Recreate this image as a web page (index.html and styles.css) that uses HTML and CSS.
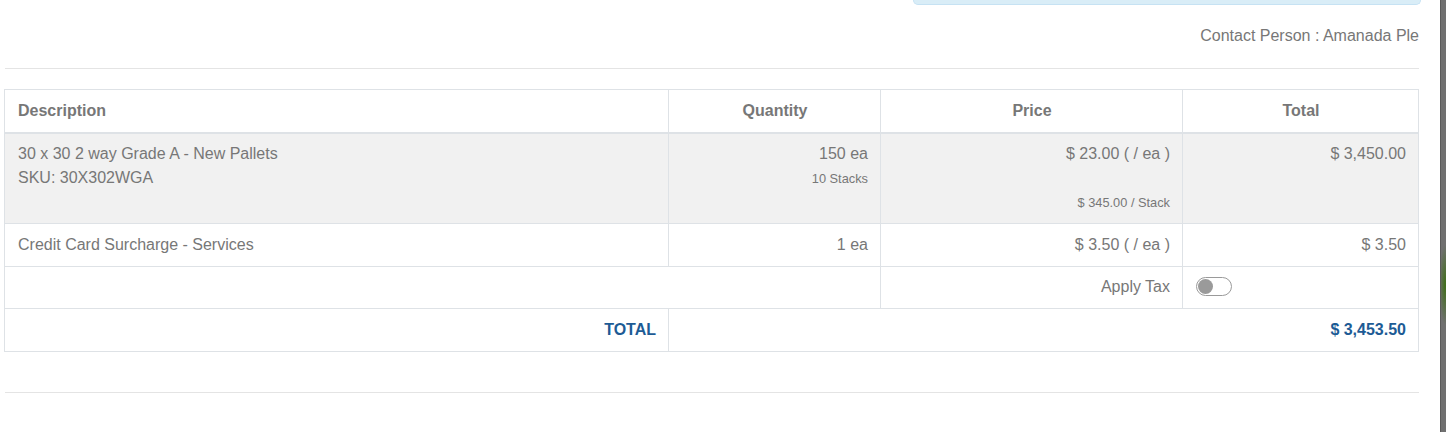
FILE: index.html
```html
<!DOCTYPE html>
<html>
<head>
<meta charset="utf-8">
<link rel="stylesheet" href="styles.css">
</head>
<body>
<div class="screen">
  <div class="modal">
    <div class="alert-row"><div class="alert"></div></div>
    <div class="contact">Contact Person : Amanada Ple</div>
    <hr class="rule rule-top">
    <table class="items">
      <colgroup>
        <col class="c-desc"><col class="c-qty"><col class="c-price"><col class="c-total">
      </colgroup>
      <thead>
        <tr>
          <th class="left">Description</th>
          <th>Quantity</th>
          <th>Price</th>
          <th>Total</th>
        </tr>
      </thead>
      <tbody>
        <tr class="shaded">
          <td class="left">30 x 30 2 way Grade A - New Pallets<br>SKU: 30X302WGA</td>
          <td class="right">150 ea<br><small>10 Stacks</small></td>
          <td class="right">$ 23.00 ( / ea )<br><br><small>$ 345.00 / Stack</small></td>
          <td class="right">$ 3,450.00</td>
        </tr>
        <tr>
          <td class="left">Credit Card Surcharge - Services</td>
          <td class="right">1 ea</td>
          <td class="right">$ 3.50 ( / ea )</td>
          <td class="right">$ 3.50</td>
        </tr>
        <tr class="tax">
          <td colspan="2"></td>
          <td class="right">Apply Tax</td>
          <td class="left"><span class="toggle"><span class="knob"></span></span></td>
        </tr>
        <tr class="grand">
          <td class="right">TOTAL</td>
          <td colspan="3" class="right">$ 3,453.50</td>
        </tr>
      </tbody>
    </table>
    <hr class="rule rule-bottom">
  </div>
  <div class="backdrop"></div>
</div>
</body>
</html>
```
FILE: styles.css
```css
html, body {
  margin: 0;
  padding: 0;
  background: #ffffff;
}
body {
  font-family: "Liberation Sans", Arial, sans-serif;
  font-size: 16px;
  line-height: 24px;
  color: #777777;
}
.screen {
  display: flex;
  height: 432px;
  overflow: hidden;
}
.modal {
  flex: 1;
  padding: 0 21px 0 4px;
  background: #ffffff;
}
.backdrop {
  width: 7px;
  flex: none;
  background:
    radial-gradient(ellipse 6px 40px at 70% 285px, rgba(60,110,20,0.95), rgba(60,110,20,0) 100%),
    #707070;
  border-left: 1px solid #5a5a5a;
  box-sizing: border-box;
}
.alert-row {
  display: flex;
  justify-content: flex-end;
}
.alert {
  width: 506px;
  height: 4px;
  margin-right: -2px;
  background: #d9edf7;
  border: 1px solid #c6e2f3;
  border-top: none;
  border-radius: 0 0 5px 5px;
}
.contact {
  text-align: right;
  margin-top: 19px;
  white-space: nowrap;
}
.rule {
  border: 0;
  border-top: 1px solid #e4e4e4;
  margin: 0 0 0 1px;
}
.rule-top {
  margin-top: 20px;
}
.rule-bottom {
  margin-top: 40px;
}
.items {
  margin-top: 20px;
  width: 1414px;
  table-layout: fixed;
  border-collapse: collapse;
  border: 1px solid #dee2e6;
}
.c-desc { width: 664px; }
.c-qty { width: 212px; }
.c-price { width: 302px; }
.c-total { width: 236px; }
.items th, .items td {
  border: 1px solid #dee2e6;
  padding: 9px 12px 9px 13px;
  vertical-align: top;
  line-height: 24px;
}
.items th {
  font-weight: bold;
  text-align: center;
  border-bottom: 2px solid #dee2e6;
}
.items th.left, .items td.left {
  text-align: left;
}
.items td.right {
  text-align: right;
}
.items small {
  font-size: 80%;
}
.shaded td {
  background: #f1f1f1;
  padding-top: 8px;
  padding-bottom: 8px;
}
.tax td {
  padding-top: 8px;
  padding-bottom: 9px;
}
.grand td {
  font-weight: bold;
  color: #1d5b95;
}
.toggle {
  display: inline-block;
  vertical-align: middle;
  width: 34px;
  height: 17px;
  border: 1px solid #9a9a9a;
  border-radius: 10px;
  box-sizing: content-box;
  position: relative;
  margin-top: -3px;
}
.knob {
  position: absolute;
  left: 1px;
  top: 1px;
  width: 15px;
  height: 15px;
  border-radius: 50%;
  background: #9a9a9a;
}
```
